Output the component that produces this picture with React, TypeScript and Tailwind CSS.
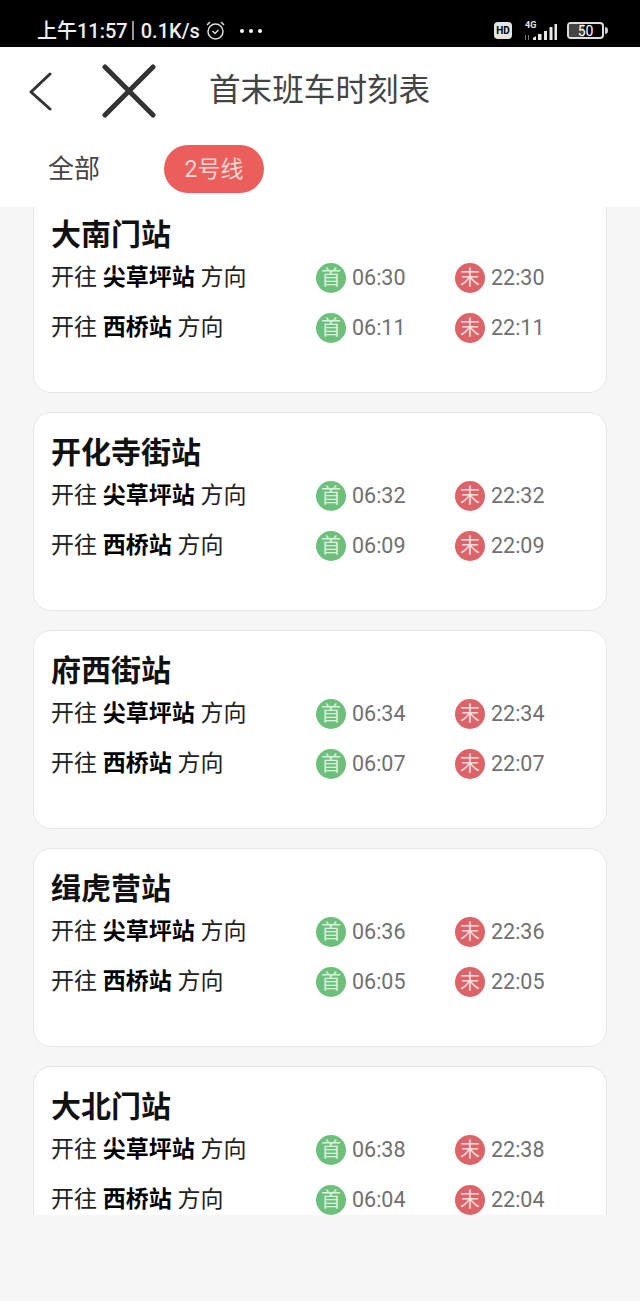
const cjk = "font-['Roboto','Noto_Sans_CJK_SC',sans-serif]";

const stations = [
  { name: "大南门站", a: ["06:30", "22:30"], b: ["06:11", "22:11"] },
  { name: "开化寺街站", a: ["06:32", "22:32"], b: ["06:09", "22:09"] },
  { name: "府西街站", a: ["06:34", "22:34"], b: ["06:07", "22:07"] },
  { name: "缉虎营站", a: ["06:36", "22:36"], b: ["06:05", "22:05"] },
  { name: "大北门站", a: ["06:38", "22:38"], b: ["06:04", "22:04"] },
];

function StatusBar() {
  return (
    <div className="flex h-[47px] items-center bg-black pl-[37px] pr-[32px] pt-[14px] text-white">
      <span className="text-[20px] font-medium leading-none text-[#eeeeee]">上午11:57</span>
      <span className="mx-[4px] h-[19px] w-[2px] bg-[#999999]" />
      <span className="ml-[3px] text-[20px] font-medium leading-none text-[#eeeeee]">0.1K/s</span>
      <svg className="ml-[5px]" width="21" height="21" viewBox="0 0 21 21" fill="none" stroke="#dddddd" strokeWidth="1.5">
        <circle cx="10.5" cy="11.5" r="7.5" />
        <path d="M7.5 11l2.5 2.5 3.5-3.5M2 5l3-3M19 5l-3-3" />
      </svg>
      <div className="ml-[14px] flex gap-[5px]">
        <span className="h-[4px] w-[4px] rounded-full bg-white" />
        <span className="h-[4px] w-[4px] rounded-full bg-white" />
        <span className="h-[4px] w-[4px] rounded-full bg-white" />
      </div>
      <div className="ml-auto flex items-center">
        <span className="flex h-[17px] w-[18px] items-center justify-center rounded-[4px] bg-[#e4e4e4] text-[10px] font-bold leading-none text-black">
          HD
        </span>
        <svg className="ml-[12px]" width="34" height="24" viewBox="0 0 34 24" fill="#e8e8e8">
          <text x="1" y="9" fontSize="9" fontWeight="700" fontFamily="Roboto">4G</text>
          <rect x="1" y="16" width="1" height="5" fill="#777777" />
          <rect x="4" y="16" width="1" height="5" fill="#777777" />
          <path d="M9 21v-2l3-2v4zM14 21v-6h3.500v6zM20 21v-9h3v9zM25.500 21v-13h3v13z" />
          <rect x="30.500" y="5" width="2.500" height="16" />
        </svg>
        <div className="ml-[9px] flex items-center">
          <div className="relative flex h-[17px] w-[37px] items-center justify-center overflow-hidden rounded-[4px] border-2 border-[#dddddd]">
            <span className="absolute inset-y-0 left-0 w-[15px] bg-[#444444]" />
            <span className="relative text-[14px] leading-none text-white">50</span>
          </div>
          <span className="ml-[1px] h-[7px] w-[3px] rounded-r-sm bg-[#cccccc]" />
        </div>
      </div>
    </div>
  );
}

function Header() {
  return (
    <div className="h-[160px] bg-white">
      <div className="flex h-[88px] items-center">
        <svg className="ml-[28px]" width="26" height="40" viewBox="0 0 26 40" fill="none" stroke="#333333" strokeWidth="3" strokeLinecap="round" strokeLinejoin="round">
          <path d="M22 3L3 21l19 17" />
        </svg>
        <svg className="ml-[48px]" width="54" height="54" viewBox="0 0 54 54" fill="none" stroke="#333333" strokeWidth="5" strokeLinecap="round">
          <path d="M3 3l48 48M51 3L3 51" />
        </svg>
        <span className="ml-[53px] text-[31.6px] leading-none text-[#444444]">首末班车时刻表</span>
      </div>
      <div className="flex items-center pl-[48px] pt-[10px]">
        <span className="text-[26px] leading-none text-[#444444]">全部</span>
        <span className="ml-[64px] flex h-[48px] w-[100px] items-center justify-center rounded-[24px] bg-[#ea5f5c] text-[23px] leading-none text-[#f8d8d4]">
          2号线
        </span>
      </div>
    </div>
  );
}

function TimeBadge({ kind, time }: { kind: "first" | "last"; time: string }) {
  const isFirst = kind === "first";
  return (
    <div className={`flex items-center gap-[6px] ${isFirst ? "w-[139px]" : ""}`}>
      <span
        className={`flex h-[30px] w-[30px] items-center justify-center rounded-full text-[20px] leading-none ${
          isFirst ? "bg-[#6dbf7c] text-[#d9f2dc]" : "bg-[#dc6468] text-[#fbdcdc]"
        }`}
      >
        {isFirst ? "首" : "末"}
      </span>
      <span className="text-[21.5px] leading-none text-[#707070]">{time}</span>
    </div>
  );
}

function Row({ to, times }: { to: string; times: string[] }) {
  return (
    <div className="flex h-[50px] items-center">
      <div className="w-[265px] pb-[2px] text-[23px] leading-none text-[#222222]">
        开往 <b className="font-bold text-black">{to}</b> 方向
      </div>
      <TimeBadge kind="first" time={times[0]} />
      <TimeBadge kind="last" time={times[1]} />
    </div>
  );
}

export default function App() {
  return (
    <div className={`flex h-[1315px] w-[640px] flex-col overflow-hidden bg-white ${cjk}`}>
      <StatusBar />
      <Header />
      <div className="h-[1094px] bg-[#f6f6f6]">
        <div className="h-[1008px] overflow-hidden">
          <div className="mx-[33px] mt-[-13px] flex flex-col gap-[19px]">
            {stations.map((s) => (
              <div key={s.name} className="h-[199px] shrink-0 rounded-[18px] border border-[#e6e6e6] bg-white pl-[17px] pt-[21px]">
                <div className="h-[37px] text-[30px] font-bold leading-[37px] text-[#111111]">{s.name}</div>
                <Row to="尖草坪站" times={s.a} />
                <Row to="西桥站" times={s.b} />
              </div>
            ))}
          </div>
        </div>
      </div>
      <div className="h-[14px] bg-white" />
    </div>
  );
}
